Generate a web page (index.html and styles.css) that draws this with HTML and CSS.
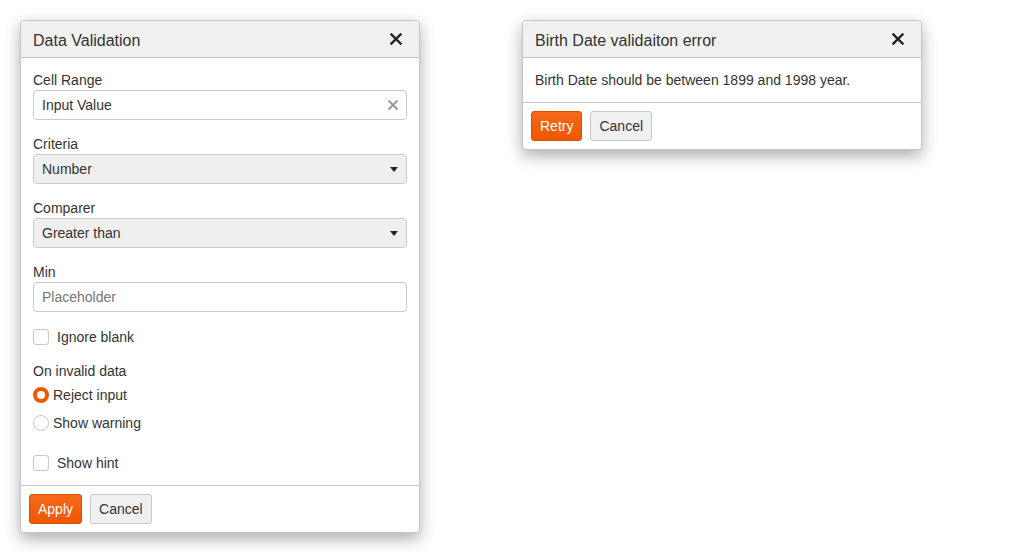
FILE: index.html
```html
<!DOCTYPE html>
<html>
<head>
<meta charset="utf-8">
<link rel="stylesheet" href="styles.css">
</head>
<body>
<div class="desk">
  <div class="dialog dv">
    <div class="dlg-head">
      <span class="dlg-title">Data Validation</span>
      <span class="dlg-close"><svg width="12" height="12" viewBox="0 0 12 12"><path d="M1.5 1.5L10.5 10.5M10.5 1.5L1.5 10.5" stroke="#222" stroke-width="2.4" stroke-linecap="square"/></svg></span>
    </div>
    <div class="dlg-body form">
      <div class="field">
        <div class="lbl">Cell Range</div>
        <div class="input"><span class="val">Input Value</span><span class="clear"><svg width="12" height="12" viewBox="0 0 12 12"><path d="M1.5 1.5L10.5 10.5M10.5 1.5L1.5 10.5" stroke="#9a9a9a" stroke-width="2"/></svg></span></div>
      </div>
      <div class="field">
        <div class="lbl">Criteria</div>
        <div class="input select"><span class="val">Number</span><span class="caret"></span></div>
      </div>
      <div class="field">
        <div class="lbl">Comparer</div>
        <div class="input select"><span class="val">Greater than</span><span class="caret"></span></div>
      </div>
      <div class="field">
        <div class="lbl">Min</div>
        <div class="input"><span class="val ph">Placeholder</span></div>
      </div>
      <div class="check first"><span class="box"></span><span>Ignore blank</span></div>
      <div class="group">
        <div class="lbl">On invalid data</div>
        <div class="radio"><span class="dot on"></span><span>Reject input</span></div>
        <div class="radio"><span class="dot"></span><span>Show warning</span></div>
      </div>
      <div class="check last"><span class="box"></span><span>Show hint</span></div>
    </div>
    <div class="dlg-foot">
      <span class="btn primary">Apply</span>
      <span class="btn">Cancel</span>
    </div>
  </div>

  <div class="dialog err">
    <div class="dlg-head">
      <span class="dlg-title">Birth Date validaiton error</span>
      <span class="dlg-close"><svg width="12" height="12" viewBox="0 0 12 12"><path d="M1.5 1.5L10.5 10.5M10.5 1.5L1.5 10.5" stroke="#222" stroke-width="2.4" stroke-linecap="square"/></svg></span>
    </div>
    <div class="dlg-body msg">Birth Date should be between 1899 and 1998 year.</div>
    <div class="dlg-foot">
      <span class="btn primary">Retry</span>
      <span class="btn">Cancel</span>
    </div>
  </div>
</div>
</body>
</html>
```

FILE: styles.css
```css
html, body {
  margin: 0;
  padding: 0;
  background: #fff;
}
body {
  font-family: "Liberation Sans", Arial, sans-serif;
  font-size: 14px;
  color: #333;
}
.desk {
  display: flex;
  align-items: flex-start;
  gap: 102px;
  padding: 20px;
}
.dialog {
  width: 398px;
  border: 1px solid #c5c5c5;
  border-radius: 4px;
  background: #fff;
  box-shadow: 0 6px 16px rgba(0, 0, 0, 0.32);
  overflow: hidden;
}
.dlg-head {
  height: 36px;
  background: #f0f0f0;
  border-bottom: 1px solid #c5c5c5;
  display: flex;
  align-items: center;
  justify-content: space-between;
  padding: 0 17px 0 12px;
}
.dlg-title {
  font-size: 16px;
  color: #333;
  padding-top: 3px;
}
.dlg-close {
  display: flex;
  width: 12px;
  height: 12px;
}
.dlg-body {
  padding: 12px 12px;
}
.form {
  display: flex;
  flex-direction: column;
  gap: 14px;
}
.lbl {
  line-height: 20px;
  height: 20px;
}
.input {
  height: 28px;
  border: 1px solid #c9c9c9;
  border-radius: 4px;
  display: flex;
  align-items: center;
  justify-content: space-between;
  padding: 0 7px 0 8px;
  background: #fff;
}
.input .val {
  line-height: 20px;
}
.input .ph {
  color: #757575;
}
.clear {
  display: flex;
  width: 12px;
  height: 12px;
}
.select {
  background: #efefef;
  padding-right: 8px;
}
.caret {
  width: 0;
  height: 0;
  border-left: 4px solid transparent;
  border-right: 4px solid transparent;
  border-top: 5px solid #222;
}
.check {
  display: flex;
  align-items: center;
  gap: 8px;
  height: 20px;
  line-height: 20px;
}
.check.first {
  margin-top: 1px;
}
.check.last {
  margin-top: 2px;
}
.box {
  width: 14px;
  height: 14px;
  border: 1px solid #c9c9c9;
  border-radius: 3px;
  background: #fff;
}
.group {
  display: flex;
  flex-direction: column;
}
.radio {
  display: flex;
  align-items: center;
  gap: 4px;
  height: 28px;
}
.dot {
  box-sizing: border-box;
  width: 16px;
  height: 16px;
  border: 1px solid #c9c9c9;
  border-radius: 50%;
  background: #fff;
}
.dot.on {
  border: 4px solid #f35800;
}
.dlg-foot {
  border-top: 1px solid #c5c5c5;
  padding: 8px 8px;
  display: flex;
  gap: 8px;
}
.btn {
  height: 28px;
  line-height: 28px;
  padding: 0 8px;
  border: 1px solid #c9c9c9;
  border-radius: 3px;
  background: #f0f0f0;
  color: #333;
}
.btn.primary {
  background: linear-gradient(#f6691a, #ee5700);
  border-color: #d94f00;
  color: #fff;
}
.msg {
  line-height: 20px;
}
```
